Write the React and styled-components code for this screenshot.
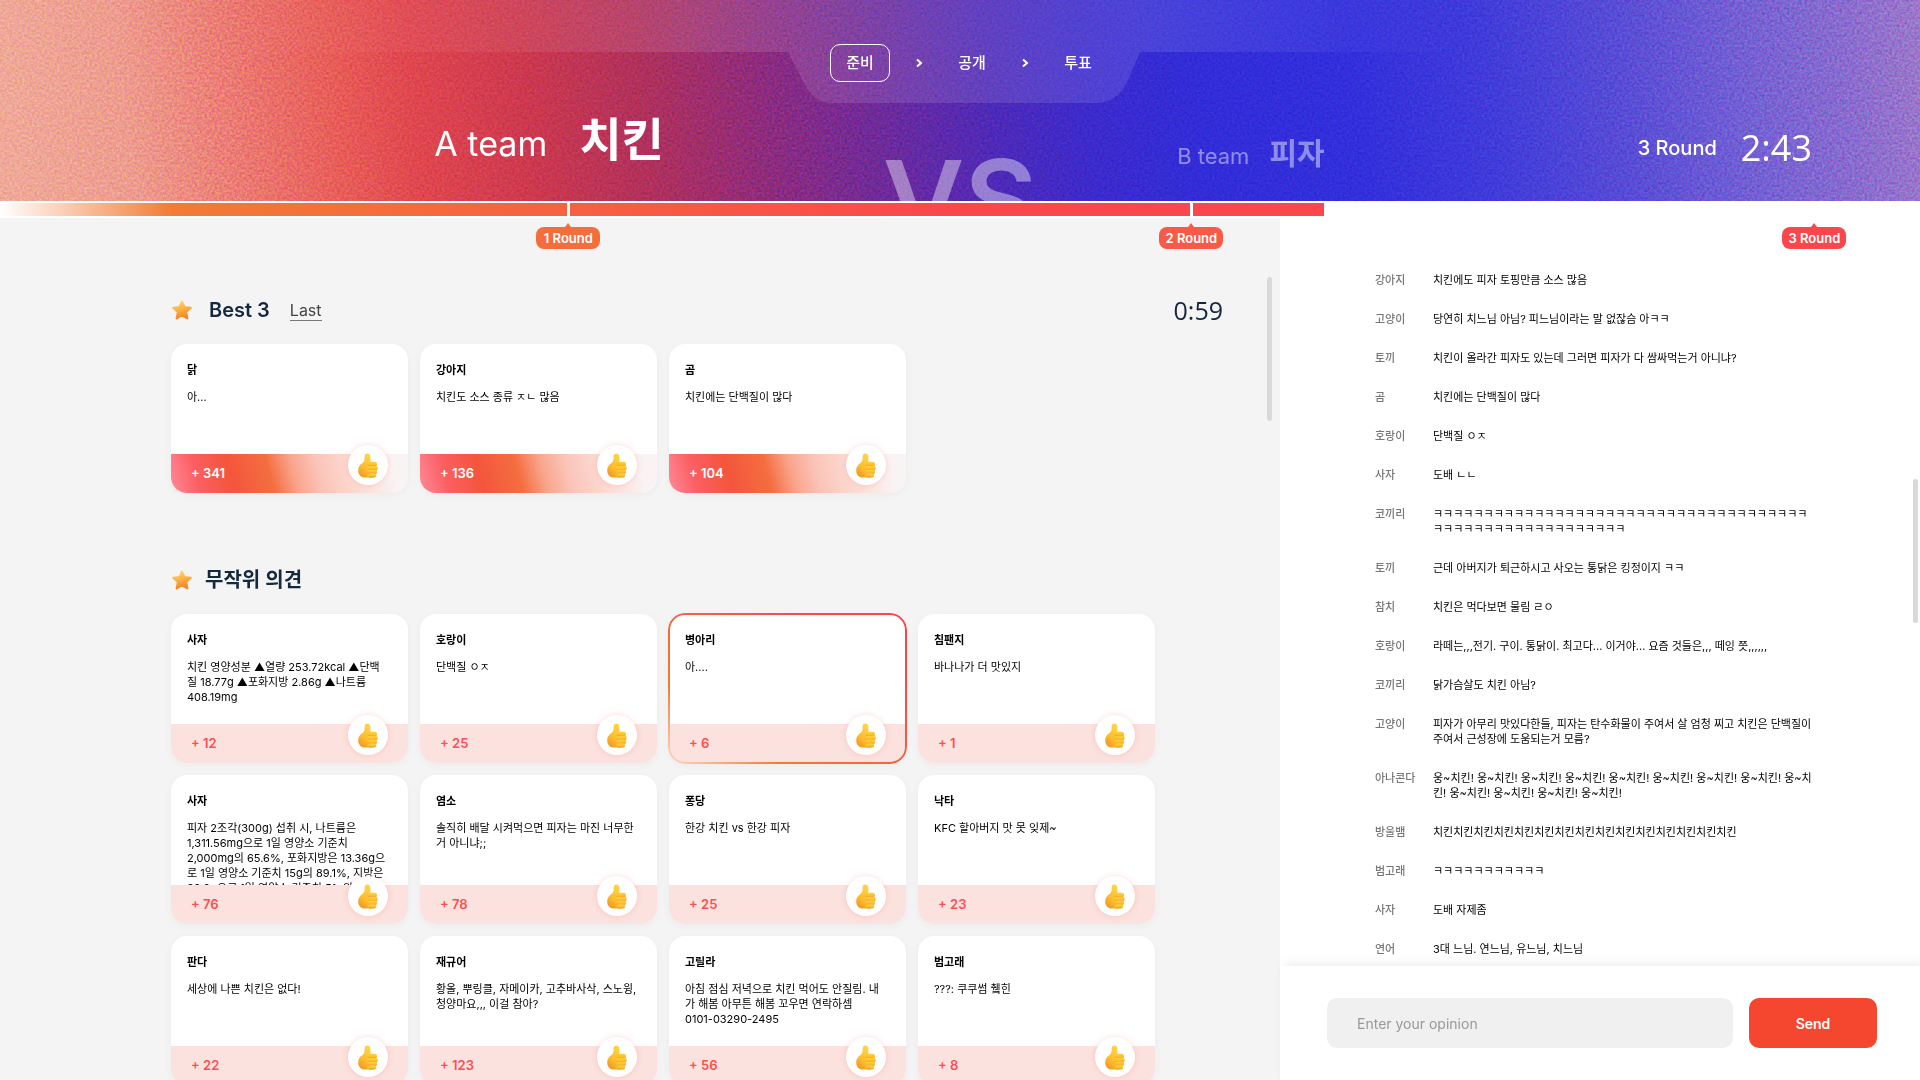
import React from 'react';
import styled, { createGlobalStyle, css } from 'styled-components';

const GlobalStyle = createGlobalStyle`
  *, *::before, *::after { box-sizing: border-box; }
  body {
    margin: 0;
    background: #fff;
    color: #000;
    font-family: Inter, "Noto Sans CJK KR", sans-serif;
  }
  h2, h3, p, ol, ul, dl, dd { margin: 0; padding: 0; }
  ol, ul { list-style: none; }
  button, input { font: inherit; border: 0; padding: 0; }
  button { cursor: pointer; }
`;

const clockFont = '"Open Sans", "Noto Sans CJK KR", sans-serif';

const Page = styled.div`
  height: 100vh;
  display: flex;
  flex-direction: column;
  overflow: hidden;
`;

/* ---------- header ---------- */

const Header = styled.header`
  position: relative;
  flex: none;
  height: 201px;
  overflow: hidden;
  color: #fff;
`;

const Backdrop = styled.svg`
  position: absolute;
  inset: 0;
  width: 100%;
  height: 100%;
`;

const Grain = styled.rect`
  mix-blend-mode: overlay;
  opacity: 0.2;
`;

const Steps = styled.ol`
  position: relative;
  display: flex;
  align-items: center;
  justify-content: center;
  padding: 44px 0 0 14px;
`;

const Step = styled.li`
  display: flex;
  align-items: center;
  justify-content: center;
  width: 52px;
  height: 38px;
  font-size: 15px;
  font-weight: 500;
  line-height: 36px;
  ${(p) =>
    p.$active &&
    css`
      width: 60px;
      margin-right: 2px;
      border: 1px solid #fff;
      border-radius: 10px;
    `}
`;

const Chevron = styled.svg`
  width: 54px;
  height: 8px;
  fill: none;
  stroke: #fff;
  stroke-width: 2;
`;

const Board = styled.div`
  position: relative;
  display: grid;
  grid-template-columns: 1fr auto 1fr;
  height: 119px;
`;

const Side = styled.div`
  display: flex;
  align-items: flex-start;
  justify-content: ${(p) => (p.$end ? 'flex-end' : 'space-between')};
  padding: ${(p) => (p.$end ? '0 219px 0 0' : '0 108px 0 140px')};
`;

const Team = styled.div`
  display: flex;
  align-items: baseline;
  gap: ${(p) => (p.$dim ? 20 : 32)}px;
  padding-top: ${(p) => (p.$dim ? 56 : 34)}px;
  opacity: ${(p) => (p.$dim ? 0.45 : 1)};
  font-size: ${(p) => (p.$dim ? 22 : 34)}px;
  line-height: 1;
`;

const Topic = styled.strong`
  font-size: ${(p) => (p.$dim ? 30 : 46)}px;
  font-weight: 700;
`;

const Versus = styled.div`
  padding-top: 62px;
  font-size: 112px;
  font-weight: 600;
  line-height: 1;
  opacity: 0.4;
`;

const RoundClock = styled.div`
  display: flex;
  align-items: center;
  gap: 24px;
  padding-top: 42px;
  font-size: 20px;
  font-weight: 500;
  line-height: 48px;
`;

const BigTime = styled.time`
  font-family: ${clockFont};
  font-size: 36px;
  font-weight: 400;
  line-height: 44px;
`;

/* ---------- timeline ---------- */

const Timeline = styled.div`
  position: relative;
  z-index: 2;
  flex: none;
  height: 17px;
  padding: 2px 0;
  background: #fff;
`;

const Fill = styled.div`
  width: ${(p) => p.$percent}%;
  height: 13px;
  background: linear-gradient(90deg, #fff 0, #f27b35 13%, #fb464c 73%);
`;

const Marker = styled.div`
  position: absolute;
  top: 0;
  left: ${(p) => p.$at}%;
  display: flex;
  flex-direction: column;
  align-items: center;
  width: 64px;
  transform: translateX(-50%);
`;

const Tick = styled.i`
  width: 3px;
  height: 17px;
  background: #fff;
`;

const Tag = styled.span`
  position: relative;
  width: 64px;
  margin-top: 9px;
  border-radius: 8px;
  background: ${(p) => p.$color};
  color: #fff;
  font-size: 13px;
  font-weight: 600;
  line-height: 22px;
  text-align: center;

  &::before {
    content: '';
    position: absolute;
    left: 29px;
    bottom: 100%;
    border: 3px solid transparent;
    border-top: 0;
    border-bottom: 4px solid ${(p) => p.$color};
  }
`;

/* ---------- body ---------- */

const Body = styled.div`
  flex: 1;
  min-height: 0;
  display: grid;
  grid-template-columns: 2fr 1fr;
`;

const Opinions = styled.main`
  position: relative;
  overflow: hidden;
  padding: 74px 57px 0 171px;
  background: #f4f4f4;
`;

const Thumb = styled.i`
  position: absolute;
  top: ${(p) => p.$top}px;
  right: ${(p) => p.$right}px;
  width: 5px;
  height: 144px;
  border-radius: 3px;
  background: #d9d9d9;
`;

const Section = styled.section`
  margin-bottom: 69px;
`;

const SectionHead = styled.div`
  display: flex;
  align-items: center;
  height: 36px;
  margin-bottom: 16px;
  color: #14283e;
`;

const StarIcon = styled.svg`
  width: 22px;
  height: 22px;
`;

const Title = styled.h2`
  margin-left: ${(p) => (p.$wide ? 16 : 12)}px;
  font-size: 20px;
  font-weight: 600;
  line-height: 36px;
`;

const LastLink = styled.a`
  margin-left: 20px;
  border-bottom: 1px solid #777;
  color: #444;
  font-size: 16px;
  line-height: 20px;
  text-decoration: none;
`;

const SmallTime = styled.time`
  margin-left: auto;
  font-family: ${clockFont};
  font-size: 25px;
  line-height: 32px;
`;

const Cards = styled.ul`
  display: grid;
  grid-template-columns: repeat(auto-fill, 237px);
  gap: 12px;
`;

const Card = styled.li`
  position: relative;
  display: flex;
  flex-direction: column;
  height: 149px;
  border-radius: 16px;
  background: #fff;
  box-shadow: 0 2px 8px rgba(0, 0, 0, 0.04);

  ${(p) =>
    p.$picked &&
    css`
      &::after {
        content: '';
        position: absolute;
        inset: -1px;
        padding: 2px;
        border-radius: 17px;
        background: linear-gradient(35deg, #fbd9c4 0, #f27b35 25%, #fb464c 80%);
        mask: linear-gradient(#000 0 0) content-box exclude, linear-gradient(#000 0 0);
        pointer-events: none;
      }
    `}
`;

const CardText = styled.div`
  height: 110px;
  padding: 19px 12px 0 16px;
  overflow: hidden;
  font-size: 11px;
  line-height: 15px;
`;

const Author = styled.h3`
  margin-bottom: 12px;
  font-size: 11px;
  font-weight: 600;
  line-height: 15px;
`;

const Words = styled.p`
  white-space: pre-line;
`;

const Score = styled.div`
  display: flex;
  height: 39px;
  padding: 0 20px;
  border-radius: 0 0 16px 16px;
  color: ${(p) => (p.$best ? '#fff' : '#fb4f52')};
  background: ${(p) =>
    p.$best
      ? 'linear-gradient(75deg, #ff8a98 0, #fb5f62 12%, #f4553c 26%, #f46e40 42%, #f9a58c 52%, #fbc4b8 62%, #fcd9d1 75%, #f9f4f3 92%)'
      : '#fbe2de'};
  font-size: 13px;
  font-weight: 600;
  line-height: 39px;
`;

const Like = styled.button`
  position: absolute;
  right: 20px;
  bottom: 8px;
  display: flex;
  align-items: center;
  justify-content: center;
  width: 40px;
  height: 40px;
  border-radius: 50%;
  background: #fff;
  box-shadow: 0 0 6px rgba(251, 70, 76, 0.2);
`;

/* ---------- chat ---------- */

const Chat = styled.aside`
  position: relative;
  display: flex;
  flex-direction: column;
  min-height: 0;
`;

const Messages = styled.dl`
  flex: 1;
  min-height: 0;
  overflow: hidden;
  display: flex;
  flex-direction: column;
  gap: 24px;
  padding: 55px 97px 0 95px;
`;

const Message = styled.div`
  flex: none;
  display: grid;
  grid-template-columns: 58px 1fr;
  font-size: 11px;
  line-height: 15px;
`;

const Sender = styled.dt`
  color: #777;
  font-weight: 500;
`;

const Line = styled.dd`
  white-space: pre-line;
`;

const Composer = styled.form`
  position: relative;
  flex: none;
  display: flex;
  gap: 16px;
  padding: 32px 43px 32px 47px;
  background: #fff;
  box-shadow: 4px -2px 10px rgba(0, 0, 0, 0.08);
`;

const OpinionInput = styled.input`
  flex: 1;
  min-width: 0;
  height: 50px;
  padding: 0 30px;
  border-radius: 10px;
  background: #f0f0f0;
  font-size: 14px;
  &::placeholder { color: #999; opacity: 1; }
`;

const Send = styled.button`
  width: 128px;
  height: 50px;
  border-radius: 10px;
  background: #f54630;
  color: #fff;
  font-size: 14px;
  font-weight: 600;
`;

/* ---------- drawings ---------- */

function HeaderArt() {
  return (
    <Backdrop viewBox="0 0 1920 201" preserveAspectRatio="none" aria-hidden="true">
      <defs>
        <linearGradient id="sky" gradientUnits="userSpaceOnUse" x1="0" y1="0" x2="1902" y2="-190">
          <stop offset="0" stopColor="#f0a898" />
          <stop offset="0.06" stopColor="#ee9c8e" />
          <stop offset="0.11" stopColor="#ec7e76" />
          <stop offset="0.17" stopColor="#e85c58" />
          <stop offset="0.21" stopColor="#e0464e" />
          <stop offset="0.27" stopColor="#cc384e" />
          <stop offset="0.33" stopColor="#b0305c" />
          <stop offset="0.39" stopColor="#8e2b7c" />
          <stop offset="0.45" stopColor="#6e2a9a" />
          <stop offset="0.51" stopColor="#4e29b8" />
          <stop offset="0.56" stopColor="#3c2acc" />
          <stop offset="0.62" stopColor="#312cd8" />
          <stop offset="0.7" stopColor="#322fdc" />
          <stop offset="0.77" stopColor="#403bda" />
          <stop offset="0.84" stopColor="#584cd6" />
          <stop offset="0.9" stopColor="#715fd4" />
          <stop offset="0.96" stopColor="#8a6ccf" />
          <stop offset="1" stopColor="#9c78ca" />
        </linearGradient>
        <linearGradient id="band" x1="0" x2="1" y1="0" y2="0">
          <stop offset="0.12" stopColor="#fff" stopOpacity="0" />
          <stop offset="0.36" stopColor="#fff" stopOpacity="0.11" />
          <stop offset="0.6" stopColor="#fff" stopOpacity="0.11" />
          <stop offset="0.76" stopColor="#fff" stopOpacity="0" />
        </linearGradient>
        <filter id="grain" x="0" y="0" width="100%" height="100%" colorInterpolationFilters="sRGB">
          <feTurbulence type="fractalNoise" baseFrequency="0.4" numOctaves="2" seed="4" />
          <feColorMatrix values="2.2 0 0 0 -0.6  0 2.2 0 0 -0.6  0 0 2.2 0 -0.6  0 0 0 0 1" />
        </filter>
      </defs>
      <rect width="1920" height="201" fill="url(#sky)" />
      <Grain width="1920" height="201" filter="url(#grain)" />
      <path
        fill="url(#band)"
        d="M0 0H1920V52H1140L1128 80Q1118 103 1096 103H832Q816 103 806 87L788 52H0Z"
      />
    </Backdrop>
  );
}

function Star() {
  return (
    <StarIcon viewBox="0 0 22 22" aria-hidden="true">
      <defs>
        <linearGradient id="starFill" x1="0" x2="0.3" y1="0" y2="1">
          <stop offset="0" stopColor="#ffd873" />
          <stop offset="0.5" stopColor="#fdb445" />
          <stop offset="1" stopColor="#f5872a" />
        </linearGradient>
      </defs>
      <path
        fill="url(#starFill)"
        stroke="url(#starFill)"
        strokeWidth="2"
        strokeLinejoin="round"
        d="M11 2.6L13.5 7.9L19.8 8.7L15.2 12.9L16.4 19.4L11 16.4L5.6 19.4L6.8 12.9L2.2 8.7L8.5 7.9Z"
      />
    </StarIcon>
  );
}

function ThumbUp() {
  return (
    <svg width="20" height="25" viewBox="0 0 20 25" aria-hidden="true">
      <defs>
        <linearGradient id="palm" x1="0.7" x2="0.2" y1="0" y2="1">
          <stop offset="0" stopColor="#ffd54a" />
          <stop offset="0.6" stopColor="#fdbb2c" />
          <stop offset="1" stopColor="#ef9326" />
        </linearGradient>
        <linearGradient id="finger" x1="0" x2="0" y1="0" y2="1">
          <stop offset="0" stopColor="#ffd23f" />
          <stop offset="0.6" stopColor="#fdbf2d" />
          <stop offset="1" stopColor="#e58f2c" />
        </linearGradient>
      </defs>
      <path
        fill="url(#palm)"
        d="M6.6 3.4C6.6 1.4 7.8 .4 9.4 .4C11.4 .4 12.4 1.8 12.4 3.6V10.5L14 24.6H7.5C3 24.6 .2 21.6 .2 17.4C.2 14.2 1.6 12 3.8 10.4C6 8.8 6.8 7.6 6.6 3.4Z"
      />
      <rect x="9.6" y="8.8" width="9.4" height="4.6" rx="2.2" fill="url(#finger)" />
      <rect x="9.6" y="12.7" width="10.2" height="4.6" rx="2.2" fill="url(#finger)" />
      <rect x="9.6" y="16.5" width="9.6" height="4.5" rx="2.2" fill="url(#finger)" />
      <rect x="9.6" y="20.3" width="8.6" height="4.3" rx="2.1" fill="url(#finger)" />
    </svg>
  );
}

function StepArrow() {
  return (
    <Chevron viewBox="0 0 54 8" aria-hidden="true">
      <path d="M25 0.5L29 4L25 7.5" />
    </Chevron>
  );
}

/* ---------- data ---------- */

const rounds = [
  { label: '1 Round', at: 29.6, color: '#f46e3c' },
  { label: '2 Round', at: 62.05, color: '#f95a48' },
  { label: '3 Round', at: 94.5, color: '#fb464c' },
];

const best = [
  { name: '닭', text: '아...', likes: 341 },
  { name: '강아지', text: '치킨도 소스 종류 ㅈㄴ 많음', likes: 136 },
  { name: '곰', text: '치킨에는 단백질이 많다', likes: 104 },
];

const random = [
  {
    name: '사자',
    text: '치킨 영양성분 ▲열량 253.72kcal ▲단백\n질 18.77g ▲포화지방 2.86g ▲나트륨\n408.19mg',
    likes: 12,
  },
  { name: '호랑이', text: '단백질 ㅇㅈ', likes: 25 },
  { name: '병아리', text: '아....', likes: 6, picked: true },
  { name: '침팬지', text: '바나나가 더 맛있지', likes: 1 },
  {
    name: '사자',
    text: '피자 2조각(300g) 섭취 시, 나트륨은\n1,311.56mg으로 1일 영양소 기준치\n2,000mg의 65.6%, 포화지방은 13.36g으\n로 1일 영양소 기준치 15g의 89.1%, 지방은\n30.0g으로 1일 영양소 기준치 51g의',
    likes: 76,
  },
  { name: '염소', text: '솔직히 배달 시켜먹으면 피자는 마진 너무한\n거 아니냐;;', likes: 78 },
  { name: '퐁당', text: '한강 치킨 vs 한강 피자', likes: 25 },
  { name: '낙타', text: 'KFC 할아버지 맛 못 잊제~', likes: 23 },
  { name: '판다', text: '세상에 나쁜 치킨은 없다!', likes: 22 },
  { name: '재규어', text: '황올, 뿌링클, 자메이카, 고추바사삭, 스노윙,\n청양마요,,, 이걸 참아?', likes: 123 },
  {
    name: '고릴라',
    text: '아침 점심 저녁으로 치킨 먹어도 안질림. 내\n가 해봄 아무튼 해봄 꼬우면 연락하셈\n0101-03290-2495',
    likes: 56,
  },
  { name: '범고래', text: '???: 쿠쿠썸 췤힌', likes: 8 },
];

const messages = [
  ['강아지', '치킨에도 피자 토핑만큼 소스 많음'],
  ['고양이', '당연히 치느님 아님? 피느님이라는 말 없잖슴 아ㅋㅋ'],
  ['토끼', '치킨이 올라간 피자도 있는데 그러면 피자가 다 쌈싸먹는거 아니냐?'],
  ['곰', '치킨에는 단백질이 많다'],
  ['호랑이', '단백질 ㅇㅈ'],
  ['사자', '도배 ㄴㄴ'],
  ['코끼리', `${'ㅋ'.repeat(37)}\n${'ㅋ'.repeat(19)}`],
  ['토끼', '근데 아버지가 퇴근하시고 사오는 통닭은 킹정이지 ㅋㅋ'],
  ['참치', '치킨은 먹다보면 물림 ㄹㅇ'],
  ['호랑이', '라떼는,,,전기. 구이. 통닭이. 최고다... 이거야... 요즘 것들은,,, 떼잉 쯧,,,,,,'],
  ['코끼리', '닭가슴살도 치킨 아님?'],
  ['고양이', '피자가 아무리 맛있다한들, 피자는 탄수화물이 주여서 살 엄청 찌고 치킨은 단백질이\n주여서 근성장에 도움되는거 모름?'],
  ['아나콘다', `${'웅~치킨! '.repeat(8)}웅~치\n킨! 웅~치킨! 웅~치킨! 웅~치킨! 웅~치킨!`],
  ['방울뱀', '치킨'.repeat(15)],
  ['범고래', 'ㅋ'.repeat(11)],
  ['사자', '도배 자제좀'],
  ['연어', '3대 느님. 연느님, 유느님, 치느님'],
];

function OpinionCard({ item, best: isBest }) {
  return (
    <Card $picked={item.picked}>
      <CardText>
        <Author>{item.name}</Author>
        <Words>{item.text}</Words>
      </CardText>
      <Score $best={isBest}>+ {item.likes}</Score>
      <Like type="button" aria-label="좋아요">
        <ThumbUp />
      </Like>
    </Card>
  );
}

export default function App() {
  return (
    <Page>
      <GlobalStyle />
      <Header>
        <HeaderArt />
        <Steps>
          <Step $active aria-current="step">준비</Step>
          <StepArrow />
          <Step>공개</Step>
          <StepArrow />
          <Step>투표</Step>
        </Steps>
        <Board>
          <Side $end>
            <Team>
              <span>A team</span>
              <Topic>치킨</Topic>
            </Team>
          </Side>
          <Versus>VS</Versus>
          <Side>
            <Team $dim>
              <span>B team</span>
              <Topic $dim>피자</Topic>
            </Team>
            <RoundClock>
              <span>3 Round</span>
              <BigTime>2:43</BigTime>
            </RoundClock>
          </Side>
        </Board>
      </Header>

      <Timeline>
        <Fill $percent={68.96} />
        {rounds.map((r) => (
          <Marker key={r.label} $at={r.at}>
            <Tick />
            <Tag $color={r.color}>{r.label}</Tag>
          </Marker>
        ))}
      </Timeline>

      <Body>
        <Opinions>
          <Section>
            <SectionHead>
              <Star />
              <Title $wide>Best 3</Title>
              <LastLink href="#last">Last</LastLink>
              <SmallTime>0:59</SmallTime>
            </SectionHead>
            <Cards>
              {best.map((item) => (
                <OpinionCard key={item.name} item={item} best />
              ))}
            </Cards>
          </Section>
          <Section>
            <SectionHead>
              <Star />
              <Title>무작위 의견</Title>
            </SectionHead>
            <Cards>
              {random.map((item) => (
                <OpinionCard key={item.name + item.likes} item={item} />
              ))}
            </Cards>
          </Section>
          <Thumb $top={59} $right={8} />
        </Opinions>

        <Chat>
          <Messages>
            {messages.map(([name, text], i) => (
              <Message key={i}>
                <Sender>{name}</Sender>
                <Line>{text}</Line>
              </Message>
            ))}
          </Messages>
          <Thumb $top={261} $right={2} />
          <Composer onSubmit={(e) => e.preventDefault()}>
            <OpinionInput aria-label="Enter your opinion" placeholder="Enter your opinion" />
            <Send type="submit">Send</Send>
          </Composer>
        </Chat>
      </Body>
    </Page>
  );
}
